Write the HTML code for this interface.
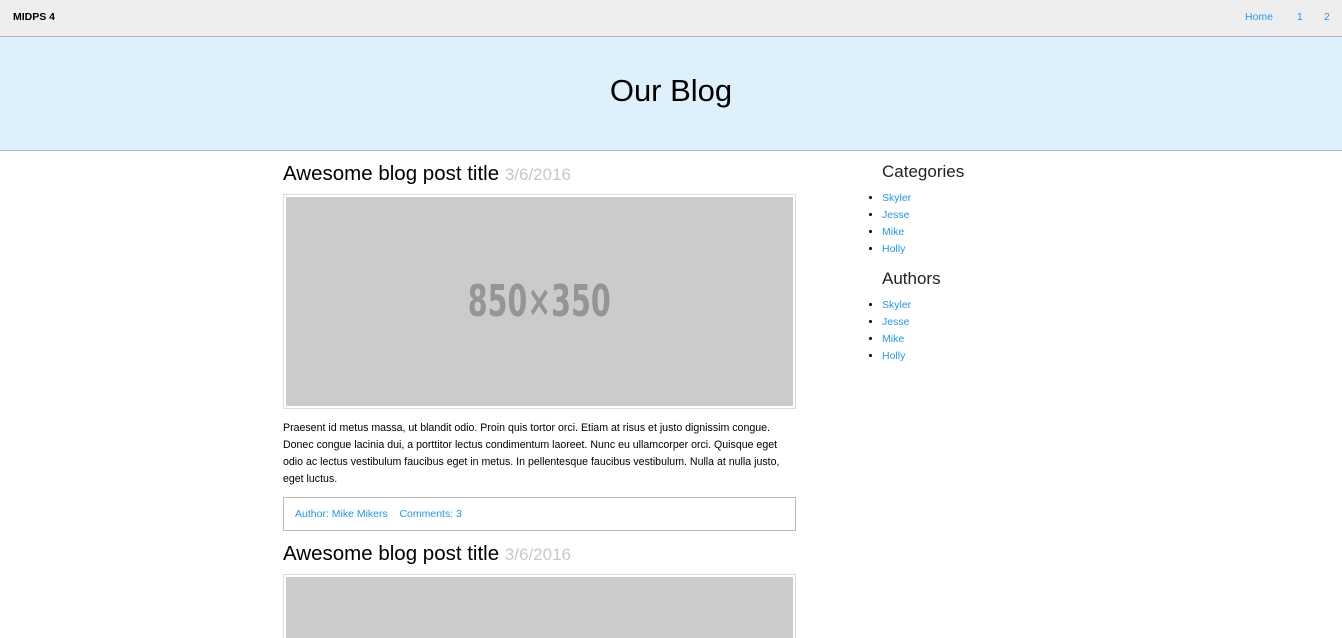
<!DOCTYPE html>
<html><head><style>
*{margin:0;padding:0;box-sizing:border-box}
html,body{width:1342px;height:638px;overflow:hidden}
body{background:#fff;font-family:"Liberation Sans",Arial,sans-serif;color:#000;position:relative}
a{color:#2196f3;text-decoration:none}
.nav{position:absolute;left:0;top:0;width:1342px;height:37px;background:#eee;border-bottom:1px solid #aab4bd}
.brand{position:absolute;left:13px;top:11px;font-size:10.5px;font-weight:bold}
.nav a{position:absolute;top:11px;font-size:10.5px}
.hero{position:absolute;left:0;top:37px;width:1342px;height:114px;background:#def0fc;border-bottom:1px solid #aab4bd;text-align:center}
.hero h1{font-weight:normal;font-size:31px;line-height:32px;padding-top:38px}
.t{position:absolute;left:283px;font-size:20.5px;font-weight:normal}
.t span{color:#c8c8c8;font-size:17px}
.img{position:absolute;left:283px;width:513px;border:1px solid #ddd;padding:2px}
.img div{background:#cbcbcb;height:100%;display:flex;align-items:center;justify-content:center;color:#959595;font-size:44px;font-family:"DejaVu Sans Condensed","Liberation Sans Narrow",sans-serif;font-weight:bold}
.img div span{display:inline-block;transform:scaleX(0.72)}
p{position:absolute;left:283px;top:420px;width:510px;font-size:10.6px;line-height:17px}
.meta{position:absolute;left:283px;top:497px;width:513px;height:34px;border:1px solid #bbb;font-size:10.5px;padding:10px 0 0 11px}
.side h3{position:absolute;left:882px;font-weight:normal;font-size:17px;color:#222}
.side ul{position:absolute;left:882px;font-size:10.5px;list-style:disc}
.side li{height:17px;line-height:17px}
</style></head><body>
<div class="nav"><div class="brand">MIDPS 4</div><a style="left:1245px">Home</a><a style="left:1297px">1</a><a style="left:1324px">2</a></div>
<div class="hero"><h1>Our Blog</h1></div>
<div class="t" style="top:162px">Awesome blog post title <span>3/6/2016</span></div>
<div class="img" style="top:194px;height:215px"><div><span>850×350</span></div></div>
<p>Praesent id metus massa, ut blandit odio. Proin quis tortor orci. Etiam at risus et justo dignissim congue. Donec congue lacinia dui, a porttitor lectus condimentum laoreet. Nunc eu ullamcorper orci. Quisque eget odio ac lectus vestibulum faucibus eget in metus. In pellentesque faucibus vestibulum. Nulla at nulla justo, eget luctus.</p>
<div class="meta"><a>Author: Mike Mikers</a>&nbsp;&nbsp;&nbsp; <a>Comments: 3</a></div>
<div class="t" style="top:542px">Awesome blog post title <span>3/6/2016</span></div>
<div class="img" style="top:574px;height:64px;border-bottom:none;padding-bottom:0"><div></div></div>
<div class="side">
<h3 style="top:162px">Categories</h3>
<ul style="top:190px"><li><a>Skyler</a></li><li><a>Jesse</a></li><li><a>Mike</a></li><li><a>Holly</a></li></ul>
<h3 style="top:269px">Authors</h3>
<ul style="top:297px"><li><a>Skyler</a></li><li><a>Jesse</a></li><li><a>Mike</a></li><li><a>Holly</a></li></ul>
</div>
</body></html>
